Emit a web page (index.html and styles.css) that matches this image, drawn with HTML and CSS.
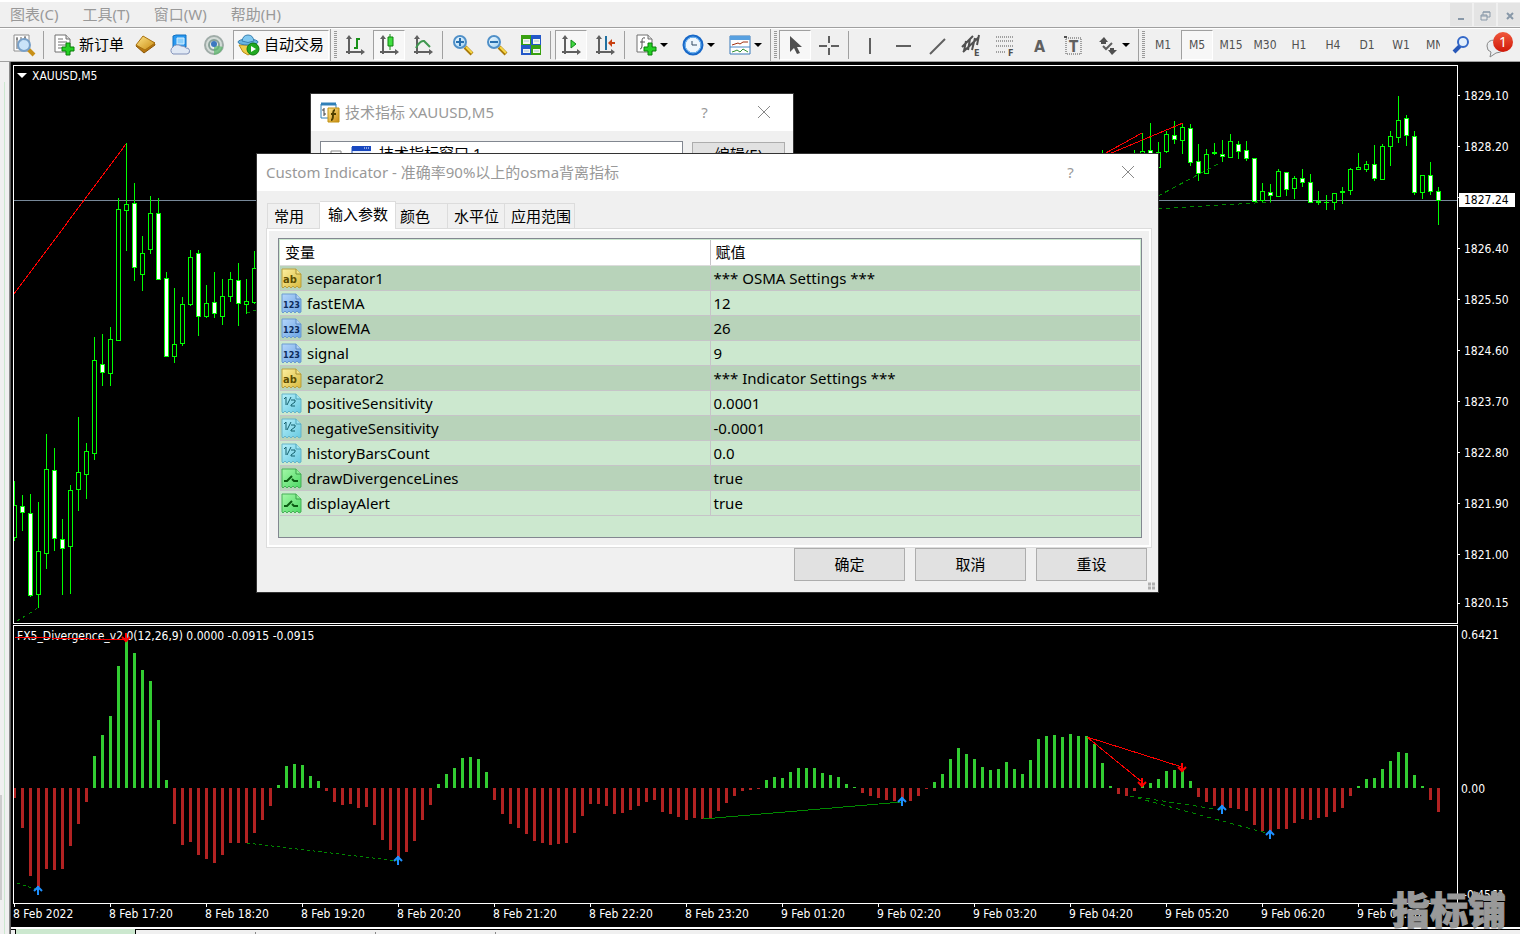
FILE: index.html
```html
<!DOCTYPE html>
<html lang="zh-CN">
<head>
    <meta charset="utf-8">
    <title>XAUUSD,M5</title>
    <link rel="stylesheet" href="styles.css">
</head>
<body>
    <!-- shared icon shapes -->
    <svg class="defs" width="0" height="0">
        <defs>
            <linearGradient id="gYellow" x2="1" y2="1"><stop offset="0" stop-color="#fdf0a0"/><stop offset="1" stop-color="#d9b93c"/></linearGradient>
            <linearGradient id="gBlue" x2="1" y2="1"><stop offset="0" stop-color="#b4d6fb"/><stop offset="1" stop-color="#6aa2e2"/></linearGradient>
            <linearGradient id="gCyan" x2="1" y2="1"><stop offset="0" stop-color="#b6f0fa"/><stop offset="1" stop-color="#66c8e0"/></linearGradient>
            <linearGradient id="gGreen" x2="1" y2="1"><stop offset="0" stop-color="#a4f8a8"/><stop offset="1" stop-color="#4cd864"/></linearGradient>
            <linearGradient id="gGold" x2="1" y2="1"><stop offset="0" stop-color="#ffe68a"/><stop offset="1" stop-color="#c88a10"/></linearGradient>
            <linearGradient id="gLens" x2="1" y2="1"><stop offset="0" stop-color="#f4fbff"/><stop offset="1" stop-color="#9fd2f4"/></linearGradient>
            <linearGradient id="gRed" x2="0" y2="1"><stop offset="0" stop-color="#f0583c"/><stop offset="1" stop-color="#d01808"/></linearGradient>
            <path id="sheet" d="M1 1h14l5 5v13l-2 1-2-2-2 2-2-2-2 2-2-2-2 2-2-2-2 2-1-1z"/>
            <symbol id="ab" viewBox="0 0 21 21">
                <use href="#sheet" fill="url(#gYellow)" stroke="#b8a040"/><path d="M15 1v5h5" fill="#f4e48c" stroke="#a89030"/>
                <text x="2" y="15" font-size="11" fill="#5c4c00" class="glyph">ab</text>
            </symbol>
            <symbol id="int" viewBox="0 0 21 21">
                <use href="#sheet" fill="url(#gBlue)" stroke="#6c9cd0"/><path d="M15 1v5h5" fill="#b0d0f4" stroke="#5c8cc4"/>
                <text x="2" y="15" font-size="9" fill="#0c2c5c" class="glyph">123</text>
            </symbol>
            <symbol id="dbl" viewBox="0 0 21 21">
                <use href="#sheet" fill="url(#gCyan)" stroke="#68b4c8"/><path d="M15 1v5h5" fill="#a0e4f0" stroke="#4ca4b8"/>
                <path d="M3 6l2-2v8M10 4l-4 8M10 7h4v2l-4 3v1h4" fill="none" stroke="#14606c"/>
            </symbol>
            <symbol id="bool" viewBox="0 0 21 21">
                <use href="#sheet" fill="url(#gGreen)" stroke="#48b058"/><path d="M15 1v5h5" fill="#90f098" stroke="#38a048"/>
                <path d="M3 13h3l5-5M11 11l2 2h4" fill="none" stroke="#0c5c14" stroke-width="2"/>
            </symbol>
            <symbol id="axes" viewBox="0 0 22 22">
                <path d="M5 3v17M2 18h17" fill="none" stroke="#606060" stroke-width="2"/>
                <path d="M5 1l3 4H2zM21 18l-4-3v6z" fill="#606060"/>
            </symbol>
            <symbol id="doc" viewBox="0 0 22 22">
                <path d="M2 1h11l4 4v13H2z" fill="#fff" stroke="#707070"/><path d="M13 1v4h4" fill="#ddd" stroke="#707070"/>
            </symbol>
            <symbol id="plus" viewBox="0 0 22 22">
                <path d="M13 9h4v4h4v4h-4v4h-4v-4H9v-4h4z" fill="#24d024" stroke="#088008"/>
            </symbol>
            <symbol id="lens" viewBox="0 0 22 22">
                <path d="M13 13l7 7" stroke="#a87808" stroke-width="4"/><path d="M14 13l6 6" stroke="#f8d848" stroke-width="2"/>
                <circle cx="8" cy="8" r="6" fill="url(#gLens)" stroke="#5090c8" stroke-width="2"/>
            </symbol>
        </defs>
    </svg>

    <nav class="menubar">
        <a href="#">图表(C)</a>
        <a href="#">工具(T)</a>
        <a href="#">窗口(W)</a>
        <a href="#">帮助(H)</a>
        <div class="mdi-buttons">
            <button aria-label="最小化"><svg width="22" height="22"><path d="M8 15h6" stroke="#8898a8" stroke-width="2"/></svg></button>
            <button aria-label="还原"><svg width="22" height="22"><path d="M9 11V8h7v5h-3M7 11h6v5H7zM9 8h7M7 12h6" fill="none" stroke="#8898a8"/></svg></button>
            <button aria-label="关闭"><svg width="22" height="22"><path d="M9 9l6 6M15 9l-6 6" stroke="#8898a8" stroke-width="2"/></svg></button>
        </div>
    </nav>

    <div class="toolbar">
        <button class="tool" aria-label="预览">
            <svg width="22" height="22"><path d="M1 1h15v16H1z" fill="#fdfdfd" stroke="#909090"/><path d="M4 3v12M3 5h2M8 3v5M12 2v5M11 4h2" stroke="#606060"/><path d="M15 15l6 6" stroke="#c89018" stroke-width="4"/><circle cx="11" cy="11" r="6" fill="#c4e0f8" fill-opacity=".9" stroke="#78a0c8" stroke-width="2"/></svg>
        </button>
        <span class="sep"></span>
        <button class="order">
            <svg width="22" height="22"><use href="#doc"/><path d="M5 5h5M5 8h9M5 11h8M5 14h4" stroke="#707070"/><use href="#plus"/></svg>
            <span>新订单</span>
        </button>
        <button class="tool" aria-label="市场">
            <svg width="22" height="22"><path d="M1 12l8 7 11-8-1-3-9 7-8-5z" fill="#b87810" stroke="#8c5808"/><path d="M8 2l12 7-10 7-9-5z" fill="url(#gGold)" stroke="#a87010"/></svg>
        </button>
        <button class="tool" aria-label="VPS">
            <svg width="22" height="22"><path d="M4 2l3-1h10v12H4z" fill="#2898f0" stroke="#1070c0"/><path d="M8 4h7v6H8z" fill="#8cd0fc" stroke="#d8f0ff"/><path d="M4 20a4 4 0 0 1 0-7 5 4 0 0 1 8-1 5 4 0 0 1 5 2 3 3 0 0 1 1 6z" fill="#e0e8f4" stroke="#8090b8"/></svg>
        </button>
        <button class="tool" aria-label="信号">
            <svg width="22" height="22"><circle cx="11" cy="11" r="9" fill="#d4dcd8" stroke="#a0aca8" stroke-width="2"/><circle cx="11" cy="11" r="5" fill="#e8ecec" stroke="#88a098" stroke-width="2"/><path d="M11 11v10a10 10 0 0 0 9-8z" fill="#58b868" fill-opacity=".7"/><circle cx="11" cy="10" r="3" fill="#3c78c0"/></svg>
        </button>
        <button class="auto pressed">
            <svg width="23" height="22"><path d="M2 11h18l-4 7-5 3-5-3z" fill="#f0cc48" stroke="#b88c18"/><ellipse cx="11" cy="8" rx="10" ry="3" fill="#68b4e0" stroke="#3880b0"/><path d="M5 7q1-6 6-6t6 6q-6 3-12 0z" fill="#80c8f0" stroke="#3880b0"/><circle cx="16" cy="15" r="6" fill="#20a820" stroke="#107810"/><path d="M14 12l5 3-5 3z" fill="#fff"/></svg>
            <span>自动交易</span>
        </button>

        <span class="handle"></span>
        <button class="tool" aria-label="柱状图"><svg width="22" height="22"><use href="#axes"/><path d="M13 4v11M13 5h3M10 14h3" stroke="#189018" stroke-width="2"/></svg></button>
        <button class="tool pressed" aria-label="蜡烛图"><svg width="22" height="22"><use href="#axes"/><path d="M12 0v16" stroke="#189018"/><path d="M10 3h5v9h-5z" fill="#40e040" stroke="#108010"/></svg></button>
        <button class="tool" aria-label="折线图"><svg width="22" height="22"><use href="#axes"/><path d="M4 14q4-8 8-7l6 6" fill="none" stroke="#409850" stroke-width="2"/></svg></button>
        <span class="sep"></span>
        <button class="tool" aria-label="放大"><svg width="22" height="22"><use href="#lens"/><path d="M4 8h8M8 4v8" stroke="#2870b0" stroke-width="2"/></svg></button>
        <button class="tool" aria-label="缩小"><svg width="22" height="22"><use href="#lens"/><path d="M4 8h8" stroke="#2870b0" stroke-width="2"/></svg></button>
        <button class="tool" aria-label="平铺窗口">
            <svg width="22" height="22"><path d="M1 1h10v10H1zM11 11h10v10H11z" fill="#38a010"/><path d="M11 1h10v10H11zM1 11h10v10H1z" fill="#2458c8"/><path d="M3 5h7v5H3zM13 5h7v5h-7zM3 15h7v4H3zM13 15h7v4h-7z" fill="#f4f8f0"/><path d="M4 7h5M14 7h5M4 17h5M14 17h5" stroke="#b0c8d8"/></svg>
        </button>
        <span class="sep"></span>
        <button class="tool pressed" aria-label="自动滚动"><svg width="22" height="22"><use href="#axes"/><path d="M11 6l5 4-5 4z" fill="#40d840" stroke="#108818"/></svg></button>
        <button class="tool" aria-label="图表平移"><svg width="22" height="22"><use href="#axes"/><path d="M12 2v14" stroke="#2070a0" stroke-width="2"/><path d="M14 9l4-4v3h3v2h-3v3z" fill="#c84010"/></svg></button>
        <span class="sep"></span>
        <button class="tool drop" aria-label="技术指标"><svg width="22" height="22"><use href="#doc"/><path d="M10 4q-3-1-3 3v5q0 3-2 3M5 8h5" fill="none" stroke="#505050"/><use href="#plus"/></svg></button>
        <button class="tool drop" aria-label="时间周期"><svg width="22" height="22"><circle cx="11" cy="11" r="9" fill="#eef6fc" stroke="#1868c8" stroke-width="3"/><circle cx="11" cy="11" r="8" fill="none" stroke="#70b8f4"/><path d="M10 7v4h5" fill="none" stroke="#304860"/></svg></button>
        <button class="tool drop" aria-label="模板"><svg width="22" height="22"><path d="M1 2h20v18H1z" fill="#fff" stroke="#3878b8"/><path d="M1 2h20v4H1z" fill="#58a0e0"/><path d="M1 13h20" stroke="#4888c8"/><path d="M3 11l3-1 3-1 2 1 3-2h5" fill="none" stroke="#a03010"/><path d="M3 18l3-1 2-1 3 2 3-3 5 3" fill="none" stroke="#309030"/></svg></button>

        <span class="handle"></span>
        <button class="tool pressed" aria-label="光标"><svg width="22" height="22"><path d="M6 2v16l4-4 3 6 3-1-3-6h5z" fill="#505050"/></svg></button>
        <button class="tool" aria-label="十字线"><svg width="22" height="22"><path d="M11 2v7M11 14v7M1 12h8M13 12h8" stroke="#606060" stroke-width="2"/></svg></button>
        <span class="sep"></span>
        <button class="tool" aria-label="垂直线"><svg width="22" height="22"><path d="M12 4v16" stroke="#606060" stroke-width="2"/></svg></button>
        <button class="tool" aria-label="水平线"><svg width="22" height="22"><path d="M4 12h15" stroke="#606060" stroke-width="2"/></svg></button>
        <button class="tool" aria-label="趋势线"><svg width="22" height="22"><path d="M4 20L19 5" stroke="#606060" stroke-width="2"/></svg></button>
        <button class="tool" aria-label="等距通道"><svg width="22" height="22"><path d="M2 13L13 2M3 18L19 3M6 7l-2 10M10 5L8 16M15 4l-3 12M19 1l-2 10" stroke="#505050" stroke-width="2"/><text x="14" y="22" font-size="9" fill="#505050" class="glyph">E</text></svg></button>
        <button class="tool" aria-label="斐波那契"><svg width="22" height="22"><path d="M2 3h18M2 7h18M2 12h18M2 18h10" stroke="#505050" stroke-dasharray="1 1"/><text x="14" y="22" font-size="9" fill="#505050" class="glyph">F</text></svg></button>
        <button class="tool" aria-label="文字"><svg width="22" height="22"><text x="6" y="18" font-size="16" fill="#606060" class="glyph">A</text></svg></button>
        <button class="tool" aria-label="文字标签"><svg width="22" height="22"><path d="M4 4h15v16H4z" fill="none" stroke="#505050" stroke-dasharray="1 1"/><path d="M2 2h3v2H2z" fill="#505050"/><text x="7" y="18" font-size="15" fill="#606060" class="glyph">T</text></svg></button>
        <button class="tool drop" aria-label="箭头"><svg width="22" height="22"><path d="M2 8l5-5 4 5H9v2H4V8zM11 16h2v-2h4v2h3l-5 5z" fill="#505050"/><path d="M6 12l3 3 6-6" fill="none" stroke="#606060" stroke-width="2"/></svg></button>

        <span class="handle"></span>
        <button class="tool period">M1</button>
        <button class="tool period pressed">M5</button>
        <button class="tool period">M15</button>
        <button class="tool period">M30</button>
        <button class="tool period">H1</button>
        <button class="tool period">H4</button>
        <button class="tool period">D1</button>
        <button class="tool period">W1</button>
        <button class="tool period cut">MN</button>
        <button class="search" aria-label="搜索"><svg width="22" height="22"><path d="M9 12l-6 6" stroke="#2858b8" stroke-width="4"/><circle cx="12" cy="8" r="5" fill="#e4f0fc" stroke="#3468c8" stroke-width="2"/></svg></button>
        <button class="chat" aria-label="消息"><svg width="30" height="28"><path d="M2 15q0-6 8-6t9 6-8 7l-6 4 1-5q-4-1-4-6z" fill="#eceef0" stroke="#888"/><circle cx="18" cy="11" r="10" fill="url(#gRed)"/><text x="14" y="16" font-size="14" fill="#fff">1</text></svg></button>
    </div>

    <div class="workspace">
        <aside class="navigator"><div class="thumb"></div></aside>
        <main class="charts">
            <section class="pane price-pane">
                <div class="plot">
                    <span class="plot-title"><i class="caret"></i>XAUUSD,M5</span>
                    <svg id="candles" viewBox="14 66 1443 557" preserveAspectRatio="none"></svg>
                </div>
                <div class="axis price-axis">
                    <span>1829.10</span><span>1828.20</span><span class="hidden"></span><span>1826.40</span><span>1825.50</span><span>1824.60</span><span>1823.70</span><span>1822.80</span><span>1821.90</span><span>1821.00</span><span class="last">1820.15</span>
                    <b class="bid">1827.24</b>
                </div>
            </section>
            <section class="pane osc-pane">
                <div class="plot">
                    <span class="plot-title">FX5_Divergence_v2.0(12,26,9) 0.0000 -0.0915 -0.0915</span>
                    <svg id="histogram" viewBox="14 626 1443 277" preserveAspectRatio="none"></svg>
                </div>
                <div class="axis osc-axis"><span>0.6421</span><span class="zero">0.00</span><span>-0.4561</span></div>
            </section>
            <div class="time-axis">
                <span>8 Feb 2022</span><span>8 Feb 17:20</span><span>8 Feb 18:20</span><span>8 Feb 19:20</span><span>8 Feb 20:20</span><span>8 Feb 21:20</span><span>8 Feb 22:20</span><span>8 Feb 23:20</span><span>9 Feb 01:20</span><span>9 Feb 02:20</span><span>9 Feb 03:20</span><span>9 Feb 04:20</span><span>9 Feb 05:20</span><span>9 Feb 06:20</span><span>9 Feb 07:20</span>
            </div>
            <div class="chart-tabs"><span class="current"></span><span></span><span></span><span></span></div>
        </main>
    </div>

    <div class="window list-window">
        <header>
            <svg width="21" height="21"><path d="M1 2h15v14H1z" fill="#fff" stroke="#3080b8"/><path d="M1 2h15" stroke="#3080b8" stroke-width="3"/><path d="M4 6v8M2 8h2M4 12h2" stroke="#404040"/><path d="M8 6h11v14H8z" fill="url(#gGold)" stroke="#c09010"/><path d="M15 8q-2 0-2 5t-2 5M11 12h5" fill="none" stroke="#504000" stroke-width="2"/></svg>
            <h2>技术指标 XAUUSD,M5</h2>
            <button aria-label="帮助">?</button>
            <button aria-label="关闭"><svg width="14" height="14"><path d="M1 1l12 12M13 1L1 13" stroke="#888"/></svg></button>
        </header>
        <div class="list-body">
            <div class="tree">
                <svg width="50" height="24"><path d="M10 9h10v10H10z" fill="#fff" stroke="#888"/><path d="M31 5h20v16H31z" fill="#e8f0fc" stroke="#2050b8"/><path d="M31 4h20v5H31z" fill="#1848c0"/><path d="M43 6h6" stroke="#fff" stroke-dasharray="1 1"/></svg>
                技术指标窗口 1
            </div>
            <button class="btn">编辑(E)</button>
        </div>
    </div>

    <div class="window input-window">
        <header>
            <h2>Custom Indicator - 准确率90%以上的osma背离指标</h2>
            <button aria-label="帮助">?</button>
            <button aria-label="关闭"><svg width="14" height="14"><path d="M1 1l12 12M13 1L1 13" stroke="#888"/></svg></button>
        </header>
        <div class="tabs">
            <button class="tab-common">常用</button>
            <button class="active">输入参数</button>
            <button class="tab-color">颜色</button>
            <button class="tab-level">水平位</button>
            <button class="tab-scope">应用范围</button>
        </div>
        <div class="panel">
            <div class="grid">
                <table>
                    <thead><tr><th>变量</th><th>赋值</th></tr></thead>
                    <tbody>
                        <tr><td><svg><use href="#ab"/></svg>separator1</td><td>*** OSMA Settings ***</td></tr>
                        <tr><td><svg><use href="#int"/></svg>fastEMA</td><td>12</td></tr>
                        <tr><td><svg><use href="#int"/></svg>slowEMA</td><td>26</td></tr>
                        <tr><td><svg><use href="#int"/></svg>signal</td><td>9</td></tr>
                        <tr><td><svg><use href="#ab"/></svg>separator2</td><td>*** Indicator Settings ***</td></tr>
                        <tr><td><svg><use href="#dbl"/></svg>positiveSensitivity</td><td>0.0001</td></tr>
                        <tr><td><svg><use href="#dbl"/></svg>negativeSensitivity</td><td>-0.0001</td></tr>
                        <tr><td><svg><use href="#dbl"/></svg>historyBarsCount</td><td>0.0</td></tr>
                        <tr><td><svg><use href="#bool"/></svg>drawDivergenceLines</td><td>true</td></tr>
                        <tr><td><svg><use href="#bool"/></svg>displayAlert</td><td>true</td></tr>
                    </tbody>
                </table>
            </div>
        </div>
        <footer>
            <button class="btn">确定</button>
            <button class="btn">取消</button>
            <button class="btn">重设</button>
        </footer>
        <svg class="size-grip" width="9" height="9"><path d="M1 2h3M5 2h3M1 6h3M5 6h3" stroke="#b0b0b0" stroke-width="3"/></svg>
    </div>

    <div class="watermark">指标铺</div>

    <script src="chart.js"></script>
</body>
</html>
```
FILE: styles.css
```css
* {
    box-sizing: border-box;
}

body {
    margin: 0;
    height: 100vh;
    display: flex;
    flex-direction: column;
    overflow: hidden;
    position: relative;
    background: #f0f0f0;
    font-family: "Noto Sans", "Noto Sans CJK SC", sans-serif;
    font-size: 15px;
    color: #000;
}

button {
    font: inherit;
    color: inherit;
    background: none;
    border: none;
    padding: 0;
    flex-shrink: 0;
}

svg {
    display: block;
    flex-shrink: 0;
}

.defs {
    position: absolute;
}

.glyph {
    font-family: "DejaVu Sans Condensed", "DejaVu Sans", sans-serif;
    font-weight: bold;
}

/* menu */
.menubar {
    display: flex;
    align-items: center;
    gap: 24px;
    height: 28px;
    flex-shrink: 0;
    padding-left: 10px;
    border-top: 2px solid #fff;
    border-bottom: 1px solid #a0a0a0;
}

.menubar a {
    height: 24px;
    color: #999;
    font-size: 15px;
    line-height: 22px;
    text-decoration: none;
}

.mdi-buttons {
    display: flex;
    gap: 2px;
    margin-left: auto;
}

.mdi-buttons button {
    width: 22px;
    height: 23px;
    background: #e4e4e4;
}

/* toolbar */
.toolbar {
    display: flex;
    align-items: center;
    height: 34px;
    flex-shrink: 0;
    padding-left: 7px;
    border-top: 1px solid #fff;
    border-bottom: 1px solid #a0a0a0;
}

.tool {
    display: flex;
    align-items: center;
    justify-content: center;
    width: 34px;
    height: 30px;
}

.tool svg {
    overflow: visible;
}

.order,
.auto {
    display: flex;
    align-items: center;
    gap: 4px;
    height: 30px;
    white-space: nowrap;
}

.order span,
.auto span {
    padding-bottom: 4px;
}

.order {
    width: 82px;
    padding-left: 6px;
}

.auto {
    width: 96px;
    margin-left: 2px;
    padding-left: 3px;
}

.pressed {
    background: #f7f7f7;
    border: 1px solid #fff;
    border-top-color: #a0a0a0;
    border-left-color: #a0a0a0;
}

.tool.pressed {
    width: 32px;
    margin: 0 1px;
}

.sep {
    width: 1px;
    height: 28px;
    margin: 0 3px 0 2px;
    background: #a0a0a0;
    flex-shrink: 0;
}

.handle {
    width: 8px;
    height: 32px;
    margin-left: 1px;
    border-left: 1px solid #a0a0a0;
    background: repeating-linear-gradient(#999 0 1px, transparent 1px 2px) 3px 2px / 3px 27px no-repeat;
    flex-shrink: 0;
}

.drop {
    width: 47px;
    justify-content: flex-start;
    padding-left: 7px;
    gap: 3px;
}

.drop::after {
    content: "";
    border: 4px solid transparent;
    border-top-color: #000;
    border-bottom: none;
}

.period {
    font-family: "DejaVu Sans Condensed", "DejaVu Sans", sans-serif;
    font-size: 12px;
    color: #505050;
}

.cut {
    width: 22px;
    overflow: hidden;
    justify-content: flex-start;
    padding-left: 8px;
}

.search {
    margin-left: auto;
}

.chat {
    margin: 0 5px 0 12px;
}

/* charts */
.workspace {
    display: flex;
    flex: 1;
    min-height: 0;
}

.navigator {
    display: flex;
    align-items: flex-end;
    width: 10px;
    padding-bottom: 34px;
    border-right: 1px solid #888;
    background: linear-gradient(#cce8cf, #cce8cf) 4px 20px / 1px 100% no-repeat;
}

.thumb {
    width: 2px;
    height: 105px;
    background: #cdcdcd;
}

.charts {
    display: flex;
    flex-direction: column;
    flex: 1;
    min-width: 0;
    padding-top: 3px;
    background: #000;
    color: #fff;
    font-family: "DejaVu Sans Condensed", "DejaVu Sans", sans-serif;
    font-size: 12px;
    border-left: 1px solid #555;
}

.pane {
    display: flex;
    padding-left: 2px;
}

.price-pane {
    flex: 1;
    min-height: 0;
    margin-bottom: 1px;
}

.osc-pane {
    height: 279px;
}

.plot {
    position: relative;
    flex: 1;
    min-width: 0;
    border: 1px solid #fff;
}

.plot svg {
    width: 100%;
    height: 100%;
    position: relative;
}

.plot-title {
    position: absolute;
    left: 3px;
    top: 1px;
    line-height: 18px;
    white-space: nowrap;
}

.caret {
    display: inline-block;
    margin: 0 5px 2px 0;
    border: 5px solid transparent;
    border-top-color: #fff;
    border-bottom: none;
}

.axis {
    display: flex;
    flex-direction: column;
    width: 62px;
    flex-shrink: 0;
}

.price-axis {
    position: relative;
    padding-top: 5px;
}

.price-axis span {
    display: flex;
    align-items: center;
    gap: 4px;
    height: 51px;
    flex-shrink: 0;
}

.price-axis span::before {
    content: "";
    width: 2px;
    height: 1px;
    background: #fff;
}

.price-axis .last {
    height: 46px;
}

.bid {
    position: absolute;
    top: 128px;
    left: 1px;
    width: 56px;
    padding-left: 5px;
    line-height: 14px;
    background: #fff;
    color: #000;
    font-weight: normal;
}

.osc-axis {
    justify-content: space-between;
    padding: 1px 0 0 3px;
    line-height: 18px;
}

.osc-axis span:last-child {
    padding-left: 2px;
}

.osc-axis .zero {
    margin-top: 47px;
}

.time-axis {
    display: flex;
    height: 23px;
    padding-left: 2px;
    overflow: hidden;
}

.time-axis span {
    width: 96px;
    flex-shrink: 0;
    line-height: 21px;
    background: linear-gradient(#fff, #fff) 1px 0 / 1px 3px no-repeat;
}

.chart-tabs {
    display: flex;
    height: 7px;
    flex-shrink: 0;
    background: #f0f0f0;
    border-top: 2px solid #fff;
    box-shadow: inset 0 1px #000;
}

.chart-tabs span {
    width: 120px;
    margin-top: 3px;
    border-right: 1px solid #888;
}

.chart-tabs .current {
    width: 121px;
    margin: 0 0 0 4px;
    background: #cce8cf;
    border: solid #000;
    border-width: 0 1px;
}

/* dialogs */
.window {
    position: absolute;
    background: #f0f0f0;
    outline: 1px solid #333;
}

.window header {
    display: flex;
    align-items: center;
    height: 37px;
    padding: 0 9px;
    background: #fff;
    color: #999;
}

.window h2 {
    margin: 0;
    padding-bottom: 2px;
    flex: 1;
    font-size: 15px;
    font-weight: normal;
}

.window header button {
    display: flex;
    justify-content: center;
    width: 57px;
    padding-bottom: 2px;
}

.window header button:last-child {
    margin-right: -7px;
}

.list-window {
    left: 311px;
    top: 94px;
    width: 482px;
    height: 80px;
}

.list-window header {
    gap: 4px;
}

.list-window header button {
    width: 55px;
}

.list-body {
    display: flex;
    justify-content: space-between;
    height: 40px;
    padding: 10px 8px 0 9px;
}

.tree {
    display: flex;
    gap: 8px;
    width: 363px;
    line-height: 22px;
    background: #fff;
    border: 1px solid #828790;
}

.list-body .btn {
    width: 93px;
    height: 26px;
    margin-top: 1px;
    line-height: 18px;
}

.input-window {
    left: 257px;
    top: 154px;
    width: 901px;
    height: 438px;
}

.tabs {
    display: flex;
    align-items: flex-end;
    height: 37px;
    padding-left: 10px;
}

.tabs button {
    height: 25px;
    line-height: 24px;
    text-align: left;
    border: 1px solid #dcdcdc;
    border-width: 1px 1px 0 0;
    white-space: nowrap;
}

.tabs .active {
    position: relative;
    width: 76px;
    height: 28px;
    margin-bottom: -1px;
    padding: 0 0 3px 8px;
    background: #fff;
}

.tabs .tab-common {
    width: 53px;
    padding-left: 6px;
    border-left-width: 1px;
}

.tabs .tab-color {
    width: 52px;
    padding-left: 4px;
}

.tabs .tab-level {
    width: 57px;
    padding-left: 6px;
}

.tabs .tab-scope {
    width: 70px;
    padding-left: 6px;
}

.panel {
    height: 320px;
    margin: 0 6px 0 9px;
    padding: 9px 9px 9px 11px;
    border: 1px solid #dcdcdc;
    box-shadow: inset 0 0 0 2px #fff;
}

.grid {
    height: 300px;
    padding: 1px;
    background: #cce8cf;
    border: 1px solid #828790;
}

.grid table {
    width: 100%;
    table-layout: fixed;
    border-collapse: collapse;
}

.grid th,
.grid td {
    height: 25px;
    padding: 0 0 0 3px;
    text-align: left;
    font-weight: normal;
    line-height: 24px;
    border-bottom: 1px solid #c6c4c8;
}

.grid th {
    padding-left: 5px;
    background: #fff;
    border-bottom-color: #dcdcdc;
}

.grid th:first-child,
.grid td:first-child {
    border-right: 1px solid #c6c4c8;
}

.grid td:first-child {
    padding-left: 1px;
}

.grid tr:nth-child(odd) td {
    background: #b8d3ba;
}

.grid td svg {
    float: left;
    width: 21px;
    height: 21px;
    margin: 2px 5px 0 0;
}

.input-window footer {
    display: flex;
    justify-content: flex-end;
    gap: 10px;
    padding-right: 11px;
}

.btn {
    width: 111px;
    height: 33px;
    padding-bottom: 2px;
    background: #e1e1e1;
    border: 1px solid #adadad;
    color: #000;
}

.size-grip {
    position: absolute;
    right: 2px;
    bottom: 1px;
}

.watermark {
    position: absolute;
    right: 14px;
    bottom: 4px;
    font-size: 38px;
    line-height: 42px;
    font-weight: 900;
    color: #999;
    -webkit-text-stroke: 1px #999;
}
```
FILE: chart.js
```js
const SVG = "http://www.w3.org/2000/svg";

// bar number, high, body top, body bottom, low, bearish
const candles = [
    [0, 481, 505, 538, 541, 0], [1, 495, 506, 513, 531, 1], [2, 494, 513, 596, 597, 1], [3, 502, 551, 595, 608, 0],
    [4, 434, 469, 554, 569, 0], [5, 448, 470, 539, 551, 1], [6, 519, 539, 549, 595, 1], [7, 485, 490, 547, 594, 0],
    [8, 417, 472, 490, 511, 0], [9, 443, 451, 475, 499, 0], [10, 337, 360, 454, 460, 0], [11, 334, 364, 373, 386, 1],
    [12, 327, 339, 374, 386, 0], [13, 198, 209, 341, 341, 0], [14, 143, 204, 211, 251, 0], [15, 183, 203, 268, 281, 1],
    [16, 236, 253, 275, 291, 0], [17, 196, 213, 250, 254, 0], [18, 198, 213, 280, 280, 1], [19, 272, 278, 357, 357, 1],
    [20, 288, 344, 357, 363, 0], [21, 297, 304, 344, 346, 0], [22, 250, 257, 305, 306, 0], [23, 250, 253, 317, 336, 1],
    [24, 285, 303, 317, 318, 0], [25, 272, 302, 314, 318, 1], [26, 279, 296, 317, 325, 0], [27, 272, 279, 297, 302, 0],
    [28, 263, 280, 304, 326, 1], [29, 279, 301, 305, 314, 0], [30, 251, 268, 303, 304, 0],
    [136, 150, 156, 170, 170, 0], [140, 150, 156, 170, 170, 0], [141, 133, 151, 170, 172, 0], [142, 123, 150, 170, 172, 1],
    [143, 142, 152, 168, 168, 0], [144, 131, 134, 152, 153, 0], [145, 121, 135, 140, 144, 1], [146, 124, 127, 141, 154, 0],
    [147, 124, 128, 163, 166, 1], [148, 144, 161, 174, 181, 1], [149, 149, 154, 174, 174, 0], [150, 143, 152, 154, 155, 1],
    [151, 140, 154, 157, 162, 1], [152, 134, 141, 158, 158, 0], [153, 141, 144, 152, 159, 1], [154, 141, 150, 159, 161, 1],
    [155, 158, 158, 202, 202, 1], [156, 183, 191, 201, 202, 0], [157, 184, 192, 196, 202, 1], [158, 169, 171, 197, 197, 0],
    [159, 172, 172, 190, 196, 1], [160, 176, 178, 189, 199, 0], [161, 169, 178, 183, 187, 1], [162, 174, 182, 203, 203, 1],
    [163, 191, 201, 203, 205, 1], [164, 195, 202, 203, 210, 1], [165, 193, 193, 203, 210, 0], [166, 187, 191, 193, 204, 1],
    [167, 168, 169, 191, 195, 0], [168, 153, 167, 170, 170, 0], [169, 161, 164, 170, 172, 0], [170, 145, 164, 179, 181, 1],
    [171, 144, 146, 180, 180, 0], [172, 131, 136, 147, 166, 0], [173, 96, 120, 138, 143, 0], [174, 115, 118, 136, 146, 1],
    [175, 131, 136, 193, 195, 1], [176, 175, 175, 193, 199, 0], [177, 162, 175, 192, 195, 1], [178, 187, 191, 201, 225, 1]
];

// oscillator value of every bar
const osma = [
    -10, -40, -88, -99, -81, -82, -81, -58, -36, -14, 32, 53, 72, 122, 148, 135, 118, 107, 68, 8,
    -36, -57, -54, -67, -71, -75, -67, -55, -55, -55, -45, -32, -18, 3, 22, 24, 23, 12, 7, -3,
    -14, -17, -16, -20, -19, -37, -52, -62, -70, -64, -53, -32, -17, 4, 14, 20, 30, 31, 29, 16,
    -12, -26, -36, -40, -46, -53, -55, -57, -56, -55, -45, -28, -16, -16, -18, -26, -25, -22, -18, -14,
    -12, -24, -26, -29, -32, -30, -31, -31, -23, -15, -8, -3, -2, -1, 8, 11, 10, 16, 20, 20,
    20, 15, 13, 11, 4, 1, -5, -8, -10, -12, -13, -13, -13, -8, -1, 6, 14, 29, 40, 34,
    29, 21, 18, 19, 26, 19, 14, 28, 49, 52, 53, 51, 54, 52, 52, 44, 25, 2, -6, -8,
    -3, 3, 5, 9, 17, 18, 18, 7, -9, -14, -18, -19, -20, -21, -23, -37, -43, -44, -41, -41,
    -35, -31, -32, -30, -29, -24, -20, -8, 2, 9, 10, 19, 27, 36, 35, 13, 2, -12, -24
];

function add(parent, name, attrs) {
    const el = document.createElementNS(SVG, name);
    for (const key in attrs) {
        el.setAttribute(key, attrs[key]);
    }
    parent.appendChild(el);
}

function rect(parent, x, y, width, height, fill) {
    add(parent, "rect", { x, y, width, height, fill, "shape-rendering": "crispEdges" });
}

function line(parent, x1, y1, x2, y2, stroke, dash) {
    add(parent, "line", { x1, y1, x2, y2, stroke, "stroke-dasharray": dash || "none", "shape-rendering": "crispEdges" });
}

function arrow(parent, x, y, dir, stroke) {
    add(parent, "path", {
        d: `M${x} ${y}v${9 * dir}M${x - 4} ${y + 5 * dir}l4 ${-4 * dir}l4 ${4 * dir}`,
        fill: "none", stroke, "stroke-width": 2
    });
}

// price chart
const price = document.getElementById("candles");
rect(price, 14, 200, 1443, 1, "#778899");
for (const [k, high, top, bottom, low, bear] of candles) {
    const x = 14 + 8 * k;
    rect(price, x, high, 1, low - high, "#00ff00");
    rect(price, x - 2, top, 5, bottom - top, "#00ff00");
    if (bottom - top > 2) {
        rect(price, x - 1, top + 1, 3, bottom - top - 2, bear ? "#fff" : "#000");
    }
}
line(price, 14, 294, 126, 144, "#f00");
line(price, 1104, 154, 1142, 133, "#f00");
line(price, 1109, 154, 1183, 123, "#f00");
line(price, 17, 621, 38, 608, "#080", "3 4");
line(price, 247, 313, 262, 308, "#080", "3 3");
line(price, 1158, 196, 1222, 162, "#080", "4 4");
line(price, 1158, 209, 1271, 202, "#080", "4 4");

// oscillator
const osc = document.getElementById("histogram");
osma.forEach((v, k) => {
    rect(osc, 13 + 8 * k, v > 0 ? 788 - v : 788, 3, Math.abs(v), v > 0 ? "#32cd32" : "#b22222");
});
line(osc, 14, 637, 126, 640, "#f00");
line(osc, 1087, 737, 1142, 782, "#f00");
line(osc, 1087, 737, 1182, 767, "#f00");
line(osc, 703, 819, 902, 802, "#080");
line(osc, 17, 883, 38, 890, "#080", "3 3");
line(osc, 247, 843, 398, 861, "#080", "3 3");
line(osc, 1130, 796, 1222, 810, "#080", "4 4");
line(osc, 1130, 796, 1270, 834, "#080", "4 4");
arrow(osc, 126, 642, -1, "#f00");
arrow(osc, 1142, 787, -1, "#f00");
arrow(osc, 1182, 772, -1, "#f00");
arrow(osc, 38, 886, 1, "#1e90ff");
arrow(osc, 398, 856, 1, "#1e90ff");
arrow(osc, 902, 797, 1, "#1e90ff");
arrow(osc, 1222, 805, 1, "#1e90ff");
arrow(osc, 1270, 830, 1, "#1e90ff");
```
